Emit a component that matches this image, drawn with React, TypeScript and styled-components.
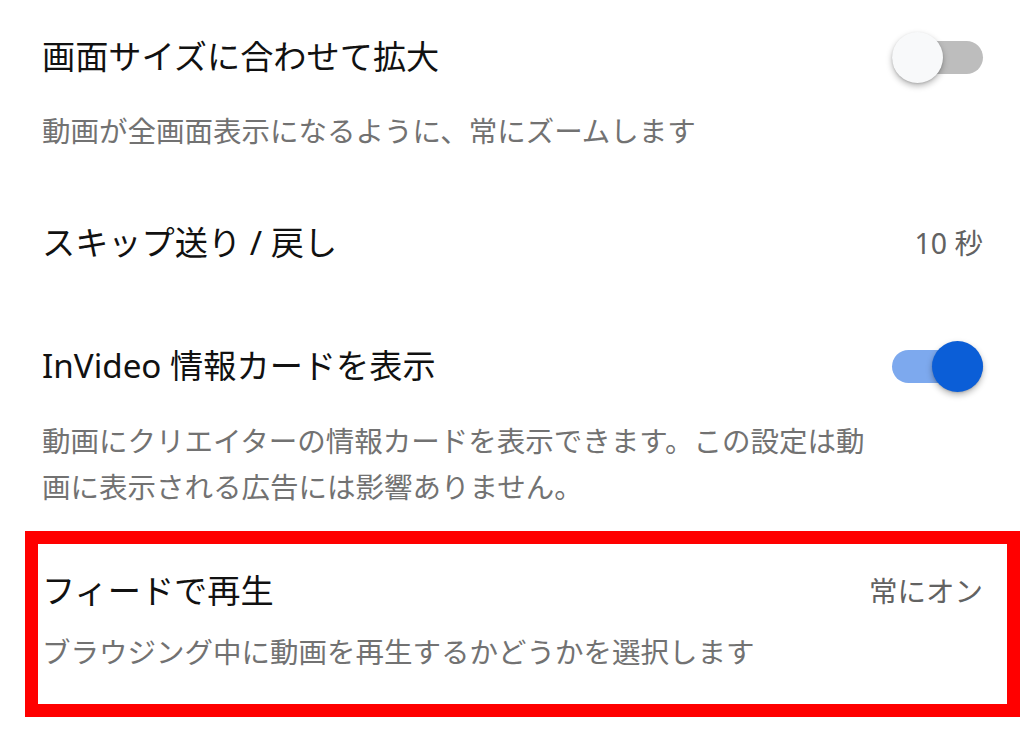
import React from "react";
import styled, { createGlobalStyle } from "styled-components";

const Global = createGlobalStyle`
  html, body { margin: 0; padding: 0; background: #ffffff; }
  body { font-family: "Noto Sans", "Noto Sans CJK JP", sans-serif; }
`;

const Page = styled.div`
  width: 1024px;
  height: 748px;
  overflow: hidden;
  background: #ffffff;
  padding-top: 34px;
  box-sizing: border-box;
  display: flex;
  flex-direction: column;
`;

const Section = styled.div<{ $gap: number; $mb: number }>`
  display: flex;
  flex-direction: column;
  gap: ${(p) => p.$gap}px;
  padding: 0 41px 0 42px;
  margin-bottom: ${(p) => p.$mb}px;
`;

const Row = styled.div`
  display: flex;
  align-items: center;
  justify-content: space-between;
  height: 46px;
`;

const Title = styled.div`
  font-size: 33.2px;
  line-height: 46px;
  color: #111111;
  white-space: nowrap;
`;

const Desc = styled.div`
  font-size: 28.5px;
  line-height: 46px;
  color: #727272;
  white-space: nowrap;
`;

const Value = styled.div`
  font-size: 28.5px;
  line-height: 46px;
  color: #626262;
  white-space: nowrap;
`;

const Track = styled.div<{ $on: boolean }>`
  width: 91px;
  height: 33px;
  border-radius: 17px;
  background: ${(p) => (p.$on ? "#7da9ee" : "#bdbdbd")};
  display: flex;
  align-items: center;
  justify-content: ${(p) => (p.$on ? "flex-end" : "flex-start")};
`;

const Knob = styled.div<{ $on: boolean }>`
  width: 51px;
  height: 51px;
  border-radius: 50%;
  flex-shrink: 0;
  background: ${(p) => (p.$on ? "#0b5ed7" : "#f8f9fa")};
  box-shadow: 0 3px 6px rgba(0, 0, 0, 0.28), 0 1px 2px rgba(0, 0, 0, 0.12);
`;

const Switch = ({ on }: { on: boolean }) => (
  <Track $on={on}>
    <Knob $on={on} />
  </Track>
);

const Highlight = styled.div`
  margin-left: 25px;
  width: 995px;
  height: 186px;
  box-sizing: border-box;
  border: 13px solid #ff0000;
  padding: 24px 24px 0 4px;
  display: flex;
  flex-direction: column;
  gap: 15px;
`;

export default function App() {
  return (
    <>
      <Global />
      <Page>
        <Section $gap={28} $mb={66}>
          <Row>
            <Title>画面サイズに合わせて拡大</Title>
            <Switch on={false} />
          </Row>
          <Desc>動画が全画面表示になるように、常にズームします</Desc>
        </Section>
        <Section $gap={0} $mb={77}>
          <Row>
            <Title>スキップ送り / 戻し</Title>
            <Value>10 秒</Value>
          </Row>
        </Section>
        <Section $gap={29} $mb={21}>
          <Row>
            <Title>InVideo 情報カードを表示</Title>
            <Switch on={true} />
          </Row>
          <Desc>
            動画にクリエイターの情報カードを表示できます。この設定は動
            <br />
            画に表示される広告には影響ありません。
          </Desc>
        </Section>
        <Highlight>
          <Row>
            <Title>フィードで再生</Title>
            <Value>常にオン</Value>
          </Row>
          <Desc>ブラウジング中に動画を再生するかどうかを選択します</Desc>
        </Highlight>
      </Page>
    </>
  );
}
